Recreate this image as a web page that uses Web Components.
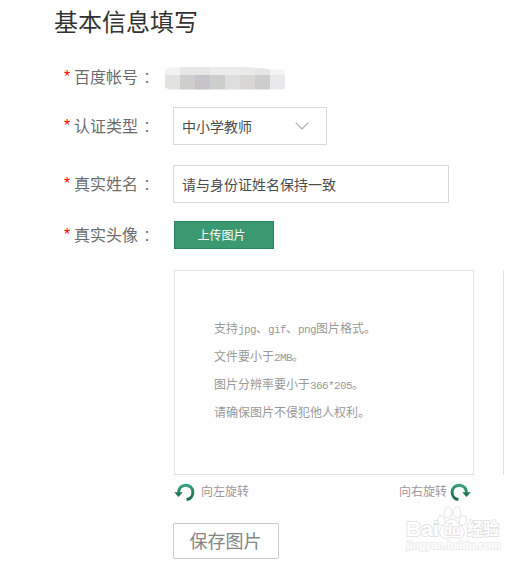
<!DOCTYPE html>
<html lang="zh-CN">
<head>
    <meta charset="UTF-8">
    <meta name="viewport" content="width=device-width, initial-scale=1.0">
    <title>基本信息填写</title>
    <style>
        body{
            margin: 0;
            background: #fff;
            color: #6c6c6c;
            font-family: "Noto Sans CJK SC", sans-serif;
            overflow: hidden;
        }
    </style>
</head>
<body>
    <info-form></info-form>

    <script>
        // small base: every element renders its own template into an open root
        class BaseElement extends HTMLElement
        {
            constructor()
            {
                super();
                const template = document.createElement('template')
                template.innerHTML = this.render()
                this.attachShadow({mode:'open'}).append(template.content.cloneNode(true))
            }
        }

        class FormRow extends BaseElement
        {
            render()
            {
                return `
                <style>
                    :host{ display: flex; align-items: center; height: 38px; }
                    .label{
                        display: flex;
                        align-items: center;
                        width: 109px;
                        height: 24px;
                        padding-bottom: 2px;
                        font-size: 16px;
                        line-height: 24px;
                        white-space: nowrap;
                        flex: none;
                    }
                    .star{ width: 10px; padding-top: 2px; color: #f00; font: 16px/24px "Liberation Sans", sans-serif; }
                    .colon{ padding: 2px 0 0 2px; font-size: 14px; font-family: "Noto Sans CJK TC", sans-serif; }
                </style>
                <div class="label"><span class="star">*</span><slot name="label"></slot><span class="colon" lang="zh-TW">：</span></div>
                <slot></slot>`
            }
        }
        customElements.define('form-row',FormRow);

        class MaskedName extends BaseElement
        {
            render()
            {
                const top = ['#f2f2f2','#e6e6e6','#e4e7e4','#ebebeb','#ebebeb','#e9e9e9','#e6e6e6','#f4f4f4']
                const bottom = ['#e3e2e0','#cccfcc','#c7c3ca','#cbcecb','#dedede','#d9d7d4','#cdcdcd','#e9e9eb']
                const cells = [...top, ...bottom].map(c => `<i style="background:${c}"></i>`).join('')
                return `
                <style>
                    :host{
                        display: grid;
                        grid-template-columns: repeat(8, 15px);
                        grid-template-rows: 8px 15px;
                        margin: 2px 0 0 -8px;
                        clip-path: polygon(0 3px, 5px 1px, 15px 1px, 24px 0, 75px 0, 86px 1px, 99px 2px, 105px 3px, 119px 3px, 120px 4px, 120px 22px, 118px 23px, 4px 23px, 0 21px);
                    }
                </style>${cells}`
            }
        }
        customElements.define('masked-name',MaskedName);

        class FieldBox extends BaseElement
        {
            render()
            {
                return `
                <style>
                    :host{
                        display: flex;
                        box-sizing: border-box;
                        align-items: center;
                        justify-content: space-between;
                        height: 38px;
                        padding: 0 17px 0 8px;
                        border: 1px solid #d9d9d9;
                        color: #4c4c4c;
                        font-size: 14px;
                        line-height: 20px;
                    }
                </style>
                <slot></slot><slot name="icon"></slot>`
            }
        }
        customElements.define('field-box',FieldBox);

        class ActionButton extends BaseElement
        {
            render()
            {
                return `
                <style>
                    :host{ display: block; }
                    button{
                        display: block;
                        box-sizing: border-box;
                        margin: 0;
                        padding: 0;
                        font-family: inherit;
                    }
                    :host([kind="upload"]) button{
                        width: 100px;
                        height: 28px;
                        margin-left: 1px;
                        padding: 0 5px 2px 0;
                        border: 1px solid #2b8460;
                        background: #3a9971;
                        color: #fff;
                        font-size: 12px;
                    }
                    :host([kind="save"]) button{
                        width: 106px;
                        height: 36px;
                        padding: 0 1px 2px 0;
                        border: 1px solid #ccc;
                        border-radius: 2px;
                        background: #fff;
                        color: #858585;
                        font-size: 18px;
                        line-height: 32px;
                    }
                </style>
                <button type="button"><slot></slot></button>`
            }
        }
        customElements.define('action-button',ActionButton);

        class RotateLink extends BaseElement
        {
            render()
            {
                return `
                <style>
                    :host{ display: flex; align-items: center; gap: 6px; font-size: 12px; line-height: 18px; color: #999; }
                    :host([dir-right]){ flex-direction: row-reverse; gap: 3px; }
                    :host([dir-right]) svg{ transform: scaleX(-1); }
                    svg{ display: block; }
                    span{ margin-top: -2px; }
                </style>
                <svg width="21" height="20" viewBox="0 0 21 20">
                    <defs>
                        <linearGradient id="g" x1="0" y1="0" x2="0" y2="1">
                            <stop offset="0" stop-color="#36a27a"/>
                            <stop offset="1" stop-color="#176c49"/>
                        </linearGradient>
                    </defs>
                    <path d="M4.6 10.8C4.4 6.2 7.6 3.2 11.6 3.2C15.8 3.2 18.9 6.2 18.9 10.2C18.9 14.2 16.2 17 12.6 17.6" fill="none" stroke="url(#g)" stroke-width="3"/>
                    <path d="M0.2 10.3H8.8L4.5 14.9Z" fill="#1d7851"/>
                </svg>
                <span><slot></slot></span>`
            }
        }
        customElements.define('rotate-link',RotateLink);

        class UploadPanel extends BaseElement
        {
            render()
            {
                return `
                <style>
                    :host{
                        display: block;
                        box-sizing: border-box;
                        width: 300px;
                        height: 205px;
                        padding: 43px 39px 0;
                        border: 1px solid #e2e2e2;
                        color: #999;
                        font-size: 12px;
                        line-height: 28px;
                        white-space: nowrap;
                        flex: none;
                    }
                    p{ margin: 0; height: 28px; }
                    b{ font-weight: normal; font-family: "Liberation Mono", monospace; font-size: 11px; letter-spacing: -.6px; }
                </style>
                <p>支持<b>jpg</b>、<b>gif</b>、<b>png</b>图片格式。</p>
                <p>文件要小于<b>2MB</b>。</p>
                <p>图片分辨率要小于<b>366*205</b>。</p>
                <p>请确保图片不侵犯他人权利。</p>`
            }
        }
        customElements.define('upload-panel',UploadPanel);

        class SiteMark extends BaseElement
        {
            render()
            {
                return `
                <style>
                    :host{ display: block; pointer-events: none; }
                    svg{ display: block; }
                    text{
                        font-family: "Liberation Sans", "Noto Sans CJK SC", sans-serif;
                        font-weight: bold;
                        paint-order: stroke;
                        stroke-width: 1.8px;
                        stroke-linejoin: round;
                    }
                </style>
                <svg width="102" height="55" viewBox="0 0 102 55" fill="#fff" stroke="#e2e2e2" stroke-width="1">
                    <text x="5" y="34.5" font-size="21" textLength="33" lengthAdjust="spacingAndGlyphs">Bai</text>
                    <ellipse cx="40.5" cy="19.5" rx="3.6" ry="5" transform="rotate(-15 40.5 19.5)"/>
                    <ellipse cx="47" cy="11.5" rx="3.8" ry="5.5"/>
                    <ellipse cx="56" cy="11.5" rx="3.8" ry="5.5"/>
                    <ellipse cx="62" cy="19.5" rx="3.6" ry="5" transform="rotate(15 62 19.5)"/>
                    <path d="M51 18C46.5 18 45 22.5 41.5 25.5C37.5 29 37.5 36.5 43.5 37.2C46.5 37.5 48 36.7 51 36.7C54 36.7 56 37.5 59 37C64.5 36 64.5 29.5 60.5 25.5C57 22.5 55.5 18 51 18Z"/>
                    <text x="43" y="33.5" font-size="14" textLength="16" lengthAdjust="spacingAndGlyphs">du</text>
                    <text x="66" y="33.5" font-size="16.5" textLength="32" lengthAdjust="spacingAndGlyphs">经验</text>
                    <text x="5.5" y="47.5" font-size="10.5" textLength="94" lengthAdjust="spacingAndGlyphs" stroke="#ededed">jingyan.baidu.com</text>
                </svg>`
            }
        }
        customElements.define('site-mark',SiteMark);

        class InfoForm extends BaseElement
        {
            render()
            {
                return `
                <style>
                    :host{
                        display: block;
                        position: relative;
                        box-sizing: border-box;
                        width: 530px;
                        height: 563px;
                        padding-left: 64px;
                        overflow: hidden;
                    }
                    h1{
                        margin: 0 0 14px -10px;
                        height: 44px;
                        font-size: 24px;
                        font-weight: normal;
                        line-height: 41px;
                        color: #333;
                    }
                    .type{ width: 154px; }
                    .name{ width: 276px; }
                    .panels{ display: flex; gap: 29px; margin: 16px 0 0 110px; }
                    .rotate{
                        display: flex;
                        justify-content: space-between;
                        width: 297px;
                        margin: 7px 0 0 110px;
                    }
                    .save{ margin: 21px 0 0 109px; }
                    .next{ width: 26px; height: 205px; box-sizing: border-box; border-left: 1px solid #e2e2e2; }
                    site-mark{ position: absolute; left: 401px; top: 501px; }
                </style>
                <h1>基本信息填写</h1>
                <form-row><span slot="label">百度帐号</span><masked-name></masked-name></form-row>
                <form-row style="margin-top:11px"><span slot="label">认证类型</span>
                    <field-box class="type">中小学教师<svg slot="icon" width="14" height="8" viewBox="0 0 14 8"><path d="M0.7 0.7L7 7L13.3 0.7" fill="none" stroke="#aaa" stroke-width="1.2"/></svg></field-box>
                </form-row>
                <form-row style="margin-top:20px"><span slot="label">真实姓名</span>
                    <field-box class="name">请与身份证姓名保持一致</field-box>
                </form-row>
                <form-row style="margin-top:13px"><span slot="label">真实头像</span>
                    <action-button kind="upload">上传图片</action-button>
                </form-row>
                <div class="panels">
                    <upload-panel></upload-panel>
                    <div class="next"></div>
                </div>
                <div class="rotate">
                    <rotate-link>向左旋转</rotate-link>
                    <rotate-link dir-right>向右旋转</rotate-link>
                </div>
                <action-button kind="save" class="save">保存图片</action-button>
                <site-mark></site-mark>`
            }
        }
        customElements.define('info-form',InfoForm);
    </script>
</body>
</html>
